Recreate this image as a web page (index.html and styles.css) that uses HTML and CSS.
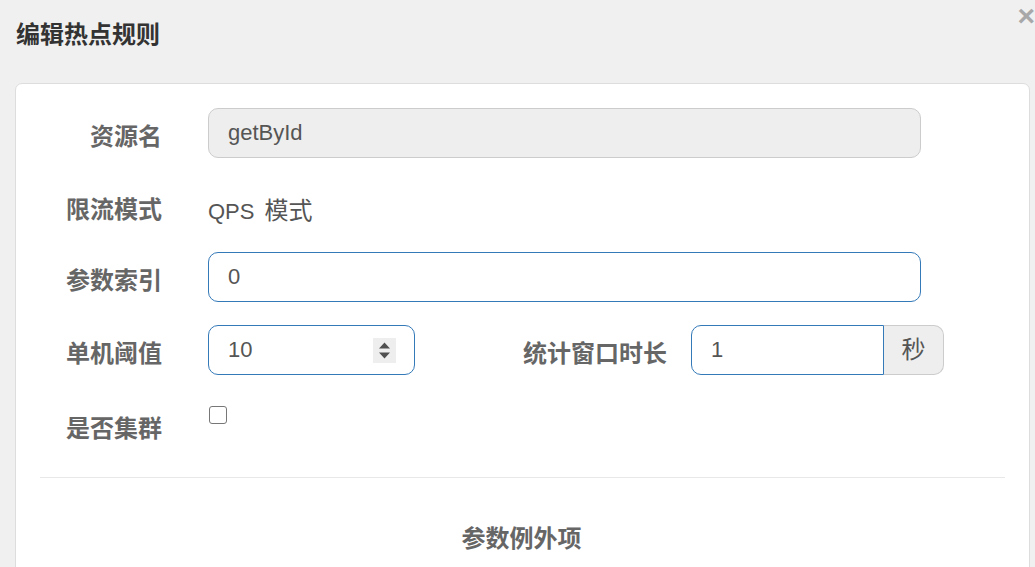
FILE: index.html
```html
<!DOCTYPE html>
<html lang="zh">
<head>
<meta charset="utf-8">
<title>编辑热点规则</title>
<link rel="stylesheet" href="styles.css">
</head>
<body>
<div class="modal">
  <div class="modal-header">
    <h4 class="modal-title">编辑热点规则</h4>
    <span class="close">×</span>
  </div>
  <div class="panel">
    <div class="form-row">
      <label class="label">资源名</label>
      <div class="control wide disabled">getById</div>
    </div>
    <div class="form-row">
      <label class="label">限流模式</label>
      <div class="static">QPS <span class="cjk">模式</span></div>
    </div>
    <div class="form-row">
      <label class="label">参数索引</label>
      <div class="control wide active">0</div>
    </div>
    <div class="form-row">
      <label class="label">单机阈值</label>
      <div class="control number active">
        <span>10</span>
        <span class="spinner">
          <svg width="23" height="25" viewBox="0 0 23 25"><path d="M6 10.5 L11.5 4.5 L17 10.5 Z M6 14.5 L17 14.5 L11.5 20.5 Z" fill="#505050"/></svg>
        </span>
      </div>
      <label class="label label-mid">统计窗口时长</label>
      <div class="input-group">
        <div class="control group-input active">1</div>
        <div class="addon"><span class="cjk">秒</span></div>
      </div>
    </div>
    <div class="form-row last-row">
      <label class="label">是否集群</label>
      <div class="check-wrap"><span class="checkbox"></span></div>
    </div>
    <hr class="divider">
    <div class="section-title">参数例外项</div>
  </div>
</div>
</body>
</html>
```

FILE: styles.css
```css
* { box-sizing: border-box; }
html, body {
  margin: 0;
  padding: 0;
  background: #f0f0f0;
  font-family: "Liberation Sans", "Noto Sans CJK SC", sans-serif;
  overflow: hidden;
}
.modal {
  position: relative;
  width: 1035px;
  height: 567px;
}
.modal-header {
  height: 83px;
  padding: 20px 16px 0 16px;
}
.modal-title {
  margin: 0;
  font-size: 24px;
  line-height: 30px;
  font-weight: bold;
  color: #333;
}
.close {
  position: absolute;
  top: 1px;
  right: 0;
  font-size: 30px;
  font-weight: bold;
  line-height: 30px;
  color: #a8a8a8;
}
.panel {
  margin-left: 15px;
  width: 1015px;
  height: 500px;
  background: #fff;
  border: 1px solid #ddd;
  border-radius: 7px;
  padding: 24px 24px 0 0;
}
.form-row {
  display: flex;
  align-items: flex-start;
  margin-bottom: 23px;
}
.label {
  width: 146px;
  flex: none;
  text-align: right;
  font-size: 24px;
  font-weight: bold;
  color: #666;
  padding-top: 12px;
  line-height: 34px;
}
.last-row .label {
  padding-top: 14px;
}
.label-mid {
  width: 252px;
  margin-right: 24px;
}
.cjk {
  font-size: 24px;
}
.static {
  margin-left: 46px;
  padding-top: 13px;
  line-height: 34px;
  font-size: 22px;
  color: #555;
  height: 48px;
  word-spacing: 4px;
}
.control {
  height: 50px;
  line-height: 48px;
  font-size: 22px;
  color: #555;
  background: #fff;
  border: 1px solid #ccc;
  border-radius: 10px;
  padding: 0 19px;
}
.wide {
  margin-left: 46px;
  width: 713px;
}
.disabled {
  background: #eee;
  border-color: #ccc;
}
.active {
  border-color: #3479b8;
}
.number {
  margin-left: 46px;
  width: 207px;
  display: flex;
  align-items: center;
  justify-content: space-between;
  padding-right: 18px;
}
.spinner {
  display: block;
  width: 23px;
  height: 25px;
  background: #eeeeee;
}
.spinner svg { display: block; }
.input-group {
  display: flex;
  height: 50px;
}
.group-input {
  width: 193px;
  border-radius: 10px 0 0 10px;
}
.addon {
  width: 60px;
  height: 50px;
  line-height: 48px;
  text-align: center;
  font-size: 22px;
  color: #555;
  background: #eee;
  border: 1px solid #ccc;
  border-left: none;
  border-radius: 0 10px 10px 0;
}
.check-wrap {
  margin-left: 47px;
  padding-top: 8px;
  height: 48px;
}
.checkbox {
  display: block;
  width: 18px;
  height: 18px;
  border: 1.5px solid #777;
  border-radius: 3px;
  background: #fff;
}
.divider {
  margin: 31px 0 0 24px;
  border: 0;
  border-top: 1px solid #e8e8e8;
  height: 0;
}
.section-title {
  margin-top: 46px;
  text-align: center;
  font-size: 24px;
  font-weight: bold;
  color: #666;
  line-height: 30px;
  padding-left: 22px;
}
```
